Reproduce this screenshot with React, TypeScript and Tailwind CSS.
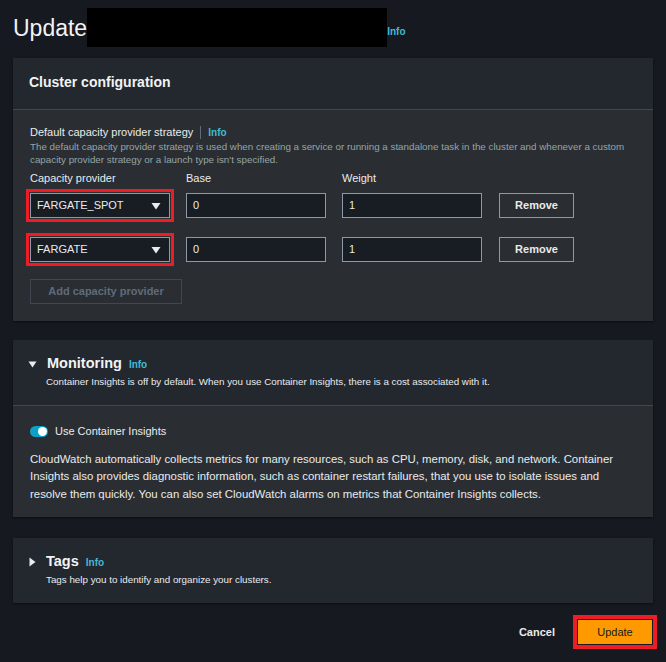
import React from 'react';

const font = { fontFamily: '"Liberation Sans", Arial, sans-serif' };

function Info({ className = '' }: { className?: string }) {
  return <span className={`font-bold text-[#44b9d6] ${className}`}>Info</span>;
}

function Caret({ open }: { open: boolean }) {
  return open ? (
    <svg width="9" height="8" viewBox="0 0 9 8" className="shrink-0">
      <path d="M0.5 1.5h8L4.5 7.5z" fill="#e9ebed" />
    </svg>
  ) : (
    <svg width="8" height="10" viewBox="0 0 8 10" className="shrink-0">
      <path d="M1.5 0.5v9l6-4.5z" fill="#e9ebed" />
    </svg>
  );
}

function Select({ value }: { value: string }) {
  return (
    <div className="w-[140px] h-[25px] flex items-center justify-between pl-[6px] pr-[8px] bg-[#181c23] border border-[#8d99a8] outline-[3px] outline-solid outline-[#ee1c25] outline-offset-[1px] text-[11px] text-[#e9ebed]">
      <span>{value}</span>
      <svg width="10" height="8" viewBox="0 0 10 8">
        <path d="M0.5 1h9L5 7.5z" fill="#e9ebed" />
      </svg>
    </div>
  );
}

function Input({ value }: { value: string }) {
  return (
    <div className="w-[140px] h-[25px] flex items-center px-[6px] bg-[#181c23] border border-[#8d99a8] text-[11px] text-[#e9ebed]">
      {value}
    </div>
  );
}

function ProviderRow({ provider }: { provider: string }) {
  return (
    <div className="flex items-center gap-[16px]">
      <Select value={provider} />
      <Input value="0" />
      <Input value="1" />
      <button className="ml-[1px] w-[75px] h-[25px] border border-[#8d99a8] text-[11px] font-bold text-[#e9ebed]">
        Remove
      </button>
    </div>
  );
}

function Collapsible({ title, open, description, children }: { title: string; open: boolean; description: string; children?: React.ReactNode }) {
  return (
    <section className="bg-[#2a2e33] shadow-[0_1px_2px_rgba(0,0,0,0.5)]">
      <div className={`bg-[#23272e] px-[15px] pt-[13px] ${open ? 'pb-[16px] border-b border-[#414750]' : 'pb-[15px]'}`}>
        <div className="flex items-center gap-[10px]">
          <Caret open={open} />
          <div className="flex items-baseline gap-[7px]">
            <h2 className="text-[14.5px] font-bold text-[#f2f3f3]">{title}</h2>
            <Info className="text-[10px]" />
          </div>
        </div>
        <p className="pl-[18px] text-[9.8px] text-[#e9ebed]">{description}</p>
      </div>
      {children}
    </section>
  );
}

export default function App() {
  return (
    <div style={font} className="min-h-screen bg-[#16191f] px-[13px] pt-[8px] pb-[18px] text-[#d1d5db]">
      {/* Title */}
      <div className="flex items-center h-[39px]">
        <h1 className="text-[23px] text-[#f2f3f3] leading-none pt-[2px]">Update</h1>
        <div className="w-[300px] h-[39px] bg-black" />
        <Info className="text-[10px] mt-[8px]" />
      </div>

      {/* Cluster configuration */}
      <section className="mt-[11px] bg-[#2a2e33] shadow-[0_1px_2px_rgba(0,0,0,0.5)]">
        <div className="h-[52px] flex items-center px-[16px] pb-[3px] bg-[#23272e] border-b border-[#414750]">
          <h2 className="text-[14px] font-bold text-[#f2f3f3]">Cluster configuration</h2>
        </div>
        <div className="px-[17px] pt-[15px] pb-[17px]">
          <div className="flex items-center leading-[15px] text-[11px] text-[#e9ebed]">
            <span>Default capacity provider strategy</span>
            <span className="mx-[7px] w-px h-[13px] bg-[#5f6b7a]" />
            <Info className="text-[10px]" />
          </div>
          <p className="text-[9.8px] leading-[13px] text-[#95a5a6]">
            The default capacity provider strategy is used when creating a service or running a standalone task in the cluster and whenever a custom capacity provider strategy or a launch type isn't specified.
          </p>
          <div className="mt-[5px] flex gap-[16px] leading-[15px] text-[11px] text-[#e9ebed]">
            <span className="w-[140px]">Capacity provider</span>
            <span className="w-[140px]">Base</span>
            <span className="w-[140px]">Weight</span>
          </div>
          <div className="mt-[7px] flex flex-col gap-[19px]">
            <ProviderRow provider="FARGATE_SPOT" />
            <ProviderRow provider="FARGATE" />
          </div>
          <button className="mt-[17px] w-[152px] h-[25px] border border-[#414750] text-[11px] font-bold text-[#5f6b7a]">
            Add capacity provider
          </button>
        </div>
      </section>

      {/* Monitoring */}
      <div className="mt-[19px]">
        <Collapsible
          title="Monitoring"
          open
          description="Container Insights is off by default. When you use Container Insights, there is a cost associated with it."
        >
          <div className="px-[17px] pt-[17px] pb-[14px]">
            <div className="flex items-center gap-[7px]">
              <div className="w-[18px] h-[11px] rounded-full bg-[#0aa2c7] flex items-center justify-end pr-[1px]">
                <div className="w-[9px] h-[9px] rounded-full bg-white" />
              </div>
              <span className="text-[11px] text-[#e9ebed]">Use Container Insights</span>
            </div>
            <p className="mt-[11px] text-[11.4px] leading-[17.5px] text-[#e9ebed]">
              CloudWatch automatically collects metrics for many resources, such as CPU, memory, disk, and network. Container Insights also provides diagnostic information, such as container restart failures, that you use to isolate issues and resolve them quickly. You can also set CloudWatch alarms on metrics that Container Insights collects.
            </p>
          </div>
        </Collapsible>
      </div>

      {/* Tags */}
      <div className="mt-[21px]">
        <Collapsible title="Tags" open={false} description="Tags help you to identify and organize your clusters." />
      </div>

      {/* Footer */}
      <div className="mt-[17px] flex items-center justify-end gap-[23px] pr-[1px]">
        <button className="text-[11px] font-bold text-[#e9ebed]">Cancel</button>
        <button className="w-[74px] h-[24px] bg-[#ff9900] outline-[4px] outline-solid outline-[#ee1c25] outline-offset-[1px] text-[11px] font-medium text-[#16191f]">
          Update
        </button>
      </div>
    </div>
  );
}
